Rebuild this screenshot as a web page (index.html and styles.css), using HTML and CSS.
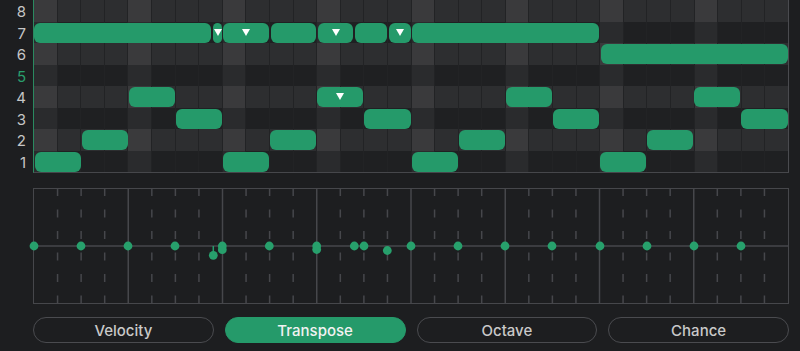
FILE: index.html
```html
<!DOCTYPE html>
<html lang="en">
<head>
  <meta charset="UTF-8">
  <meta name="viewport" content="width=device-width, initial-scale=1.0">
  <title>Step Sequencer</title>
  <link rel="stylesheet" href="styles.css">
</head>
<body>

  <div class="roll">
    <div class="labels">
      <span>8</span>
      <span>7</span>
      <span>6</span>
      <span class="root">5</span>
      <span>4</span>
      <span>3</span>
      <span>2</span>
      <span>1</span>
    </div>
    <div class="grid" id="grid"></div>
  </div>

  <!-- Modulation lane -->
  <div class="lane">
    <svg id="lane" width="754" height="114" viewBox="0 0 754 114"></svg>
  </div>

  <div class="tabs">
    <button class="tab">Velocity</button>
    <button class="tab active">Transpose</button>
    <button class="tab">Octave</button>
    <button class="tab">Chance</button>
  </div>

  <script>
    const grid = document.getElementById('grid');
    const lane = document.getElementById('lane');
    const cols = 32;
    const rows = 8;
    const colWidth = 754 / cols;
    const rowHeight = 21.5;

    // Background cells: light rows on even numbers, brighter every 4th step
    for (let r = 0; r < rows; r++) {
      for (let c = 0; c < cols; c++) {
        const cell = document.createElement('div');
        cell.classList.add('cell');
        if (r % 2 === 0) cell.classList.add('light');
        if (c % 4 === 0) cell.classList.add('beat');
        grid.appendChild(cell);
      }
    }

    // Notes: [row from top, left px, width px, has slide marker]
    const notes = [
      [1, 0, 177], [1, 179, 9, true], [1, 189, 46, true], [1, 237, 45],
      [1, 284, 35, true], [1, 321, 32], [1, 355, 22, true], [1, 378, 187],
      [2, 567, 187]
    ];

    // Regular two-step notes: [row, start step, has marker]
    const steps = [
      [4, 4], [4, 12, true], [4, 20], [4, 28],
      [5, 6], [5, 14], [5, 22], [5, 30],
      [6, 2], [6, 10], [6, 18], [6, 26],
      [7, 0], [7, 8], [7, 16], [7, 24]
    ];
    steps.forEach(([row, step, marker]) => {
      notes.push([row, step * colWidth + 0.5, 2 * colWidth - 1, marker]);
    });

    notes.forEach(([row, left, width, marker]) => {
      const note = document.createElement('div');
      note.classList.add('note');
      if (marker) note.classList.add('marker');
      note.style.top = `${row * rowHeight + 1}px`;
      note.style.left = `${left}px`;
      note.style.width = `${width}px`;
      grid.appendChild(note);
    });

    function svgLine(x1, y1, x2, y2, cls) {
      const line = document.createElementNS('http://www.w3.org/2000/svg', 'line');
      line.setAttribute('x1', x1);
      line.setAttribute('y1', y1);
      line.setAttribute('x2', x2);
      line.setAttribute('y2', y2);
      line.setAttribute('class', cls);
      lane.appendChild(line);
    }

    // Step rules in the lane
    for (let i = 1; i < cols; i++) {
      const x = i * colWidth;
      svgLine(x, 0, x, 114, i % 4 === 0 ? 'rule' : 'rule tick');
    }
    svgLine(0, 57, 754, 57, 'rule');

    // Values: [x, y] in lane coordinates
    const dots = [
      [0, 57], [47, 57], [94, 57], [141, 57], [179.3, 66.3], [188.3, 57],
      [188.3, 60.7], [235.3, 57], [282.7, 57], [282.7, 60.5], [320.3, 57],
      [330, 57], [353.3, 61.5], [377, 57], [424, 57], [471, 57], [518, 57],
      [566, 57], [613, 57], [660, 57], [707, 57]
    ];
    dots.forEach(([x, y]) => {
      if (y - 57 > 5) svgLine(x, 57, x, y, 'stem');
      const dot = document.createElementNS('http://www.w3.org/2000/svg', 'circle');
      dot.setAttribute('cx', x);
      dot.setAttribute('cy', y);
      dot.setAttribute('r', 4.4);
      dot.setAttribute('class', 'dot');
      lane.appendChild(dot);
    });
  </script>

</body>
</html>
```

FILE: styles.css
```css
body {
  margin: 0;
  background: #1d1e20;
  font-family: 'Inter', 'Noto Sans', sans-serif;
  color: #c8c8c8;
}

.roll {
  display: flex;
}

.labels {
  width: 33px;
  padding-right: 7px;
  box-sizing: border-box;
  display: grid;
  grid-template-rows: repeat(8, 21.5px);
  text-align: right;
  font-size: 15px;
  line-height: 24px;
  color: #c6c6c6;
}

.labels .root {
  color: #2a9e6d;
}

.grid {
  position: relative;
  width: 754px;
  height: 172px;
  display: grid;
  grid-template-columns: repeat(32, 1fr);
  grid-template-rows: repeat(8, 1fr);
  column-gap: 1px;
  background: #222325;
  border-left: 1px solid #2a8a60;
  border-right: 1px solid #4a4b4f;
  border-bottom: 1px solid #46474b;
}

.cell {
  background: #1f2022;
}

.cell.beat {
  background: #2a2b2d;
}

.cell.light {
  background: #2d2e30;
}

.cell.light.beat {
  background: #3a3a3c;
}

.note {
  position: absolute;
  height: 20px;
  background: #259a6a;
  border-radius: 6px;
  display: flex;
  align-items: center;
  justify-content: center;
}

/* Slide marker */
.note.marker::after {
  content: '';
  margin-top: -1px;
  border-left: 4px solid transparent;
  border-right: 4px solid transparent;
  border-top: 7px solid #ffffff;
}

.lane {
  margin: 15px 0 0 33px;
  width: 754px;
  height: 114px;
  border: 1px solid #46474b;
}

.lane svg {
  display: block;
  overflow: visible;
}

.lane .rule {
  stroke: #46474b;
  stroke-width: 1.5;
}

.lane .tick {
  stroke-dasharray: 8 13.5;
  stroke-dashoffset: 1;
}

.lane .stem {
  stroke: #259a6a;
  stroke-width: 1.5;
}

.lane .dot {
  fill: #27a06c;
}

.tabs {
  display: flex;
  gap: 11px;
  width: 756px;
  margin: 13px 0 0 33px;
}

.tab {
  flex: 1;
  height: 26px;
  padding: 0;
  border: 1px solid #4a4b4f;
  border-radius: 13px;
  background: transparent;
  color: #c9c9c9;
  font-family: 'Inter', 'Noto Sans', sans-serif;
  font-size: 15px;
  font-weight: 500;
}

.tab.active {
  background: #259a6a;
  border-color: #259a6a;
  color: #f2f2f2;
}
```
